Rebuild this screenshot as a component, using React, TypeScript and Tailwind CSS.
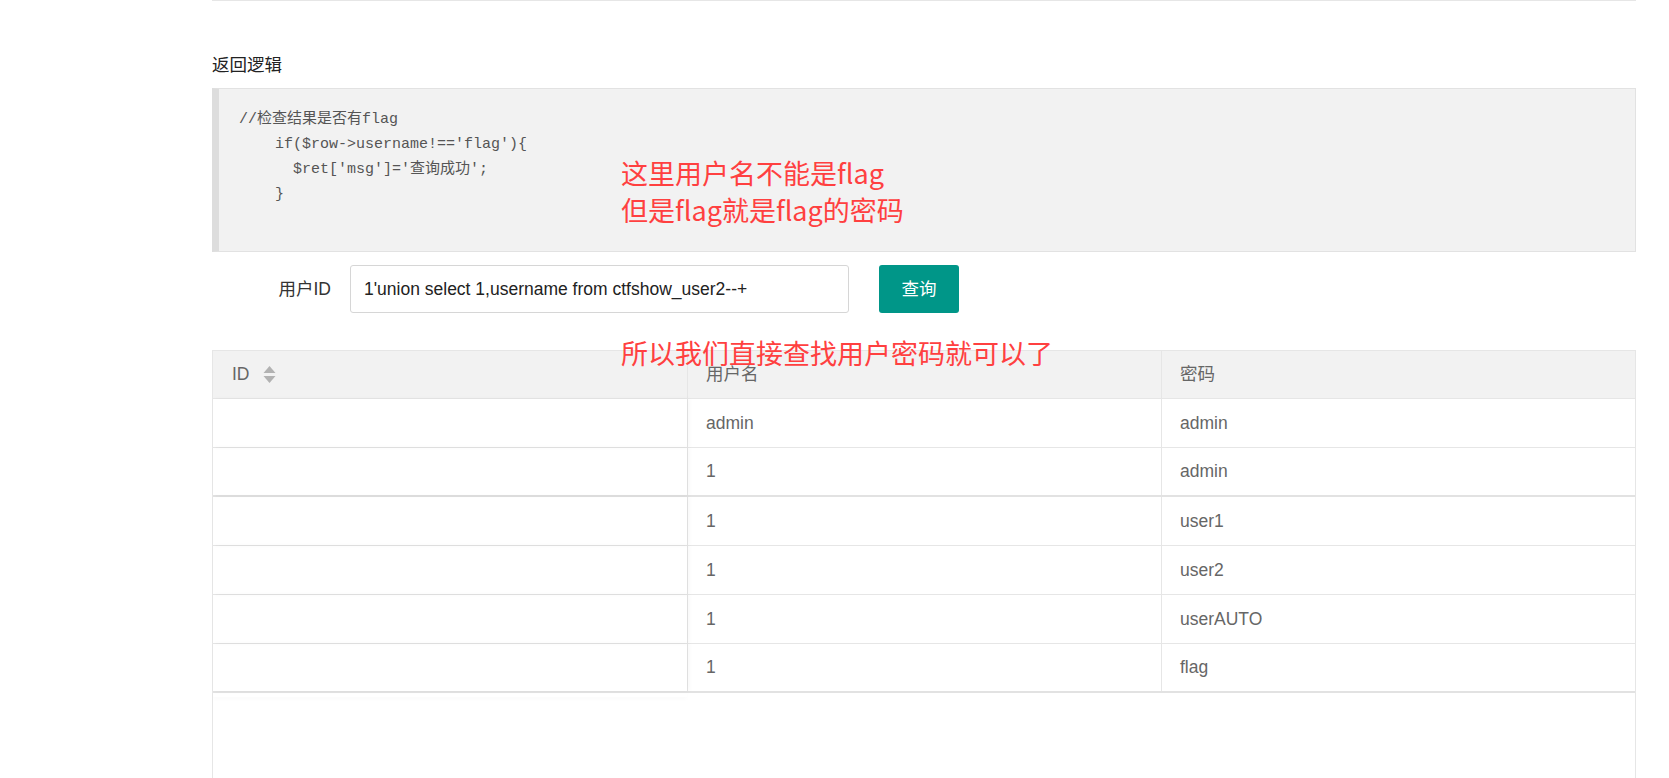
import React from "react";

const sans = "font-['Liberation_Sans','Noto_Sans_CJK_SC',sans-serif]";
const mono = "font-['Liberation_Mono','Noto_Sans_CJK_SC',monospace]";

const rows: { name: string; pass: string; thick?: boolean }[] = [
  { name: "admin", pass: "admin" },
  { name: "1", pass: "admin", thick: true },
  { name: "1", pass: "user1" },
  { name: "1", pass: "user2" },
  { name: "1", pass: "userAUTO" },
  { name: "1", pass: "flag", thick: true },
];

function SortIcon() {
  return (
    <svg width="13" height="17" viewBox="0 0 13 17" className="ml-[13px]">
      <path d="M6.5 0 L12.5 7 L0.5 7 Z" fill="#b2b2b2" />
      <path d="M0.5 10 L12.5 10 L6.5 17 Z" fill="#b2b2b2" />
    </svg>
  );
}

export default function App() {
  return (
    <div className={`relative h-[778px] overflow-hidden bg-white ${sans}`}>
      <div className="ml-[212px] w-[1424px]">
        <div className="h-px bg-[#e6e6e6]" />

        <div className="mt-[52px] text-[17.5px] leading-[24px] text-[#222]">返回逻辑</div>

        {/* code block */}
        <div className="mt-[11px] h-[164px] border border-[#e2e2e2] border-l-[7px] border-l-[#dddddd] bg-[#f2f2f2] pt-[18px] pl-[20px]">
          <pre className={`${mono} whitespace-pre text-[15px] leading-[25px] text-[#555]`}>
            {"//检查结果是否有flag\n    if($row->username!=='flag'){\n      $ret['msg']='查询成功';\n    }"}
          </pre>
        </div>

        {/* form row */}
        <div className="mt-[13px] flex h-[48px] items-center">
          <div className="w-[119px] text-right text-[17.5px] text-[#333]">用户ID</div>
          <div className="ml-[19px] flex h-[48px] w-[499px] items-center rounded-[3px] border border-[#d6d6d6] pl-[13px] text-[17.5px] text-[#222]">
            1'union select 1,username from ctfshow_user2--+
          </div>
          <button
            type="button"
            className="ml-[30px] h-[48px] w-[80px] rounded-[3px] bg-[#009688] text-[17.5px] text-white"
          >
            查询
          </button>
        </div>

        {/* table */}
        <div className="mt-[37px] h-[500px] border border-[#e6e6e6] text-[17.5px] text-[#666]">
          <div className="grid h-[48px] grid-cols-3 border-b border-[#e6e6e6] bg-[#f2f2f2]">
            <div className="flex items-center pl-[19px]">
              ID
              <SortIcon />
            </div>
            <div className="flex items-center border-l border-[#e6e6e6] pl-[18px]">用户名</div>
            <div className="flex items-center border-l border-[#e6e6e6] pl-[18px]">密码</div>
          </div>
          {rows.map((r, i) => (
            <div
              key={i}
              className={`grid h-[49px] grid-cols-3 border-b ${r.thick ? "border-b-2 border-[#e2e2e2]" : "border-[#e6e6e6]"}`}
            >
              <div className="relative z-10 shadow-[2px_0_5px_rgba(0,0,0,0.04)]" />
              <div className="flex items-center border-l border-[#e6e6e6] pl-[18px]">{r.name}</div>
              <div className="flex items-center border-l border-[#e6e6e6] pl-[18px]">{r.pass}</div>
            </div>
          ))}
          <div className="h-[4px] w-[474px] shadow-[0_2px_4px_rgba(0,0,0,0.025)]" />
        </div>
      </div>

      {/* annotations */}
      <div className="absolute left-[621px] top-[154px] text-[27px] leading-[37px] text-[#ff4040] font-['Noto_Sans_CJK_SC',sans-serif]">
        <div>这里用户名不能是flag</div>
        <div>但是flag就是flag的密码</div>
      </div>
      <div className="absolute left-[621px] top-[334px] text-[27px] leading-[37px] text-[#ff4040] font-['Noto_Sans_CJK_SC',sans-serif]">
        所以我们直接查找用户密码就可以了
      </div>
    </div>
  );
}
